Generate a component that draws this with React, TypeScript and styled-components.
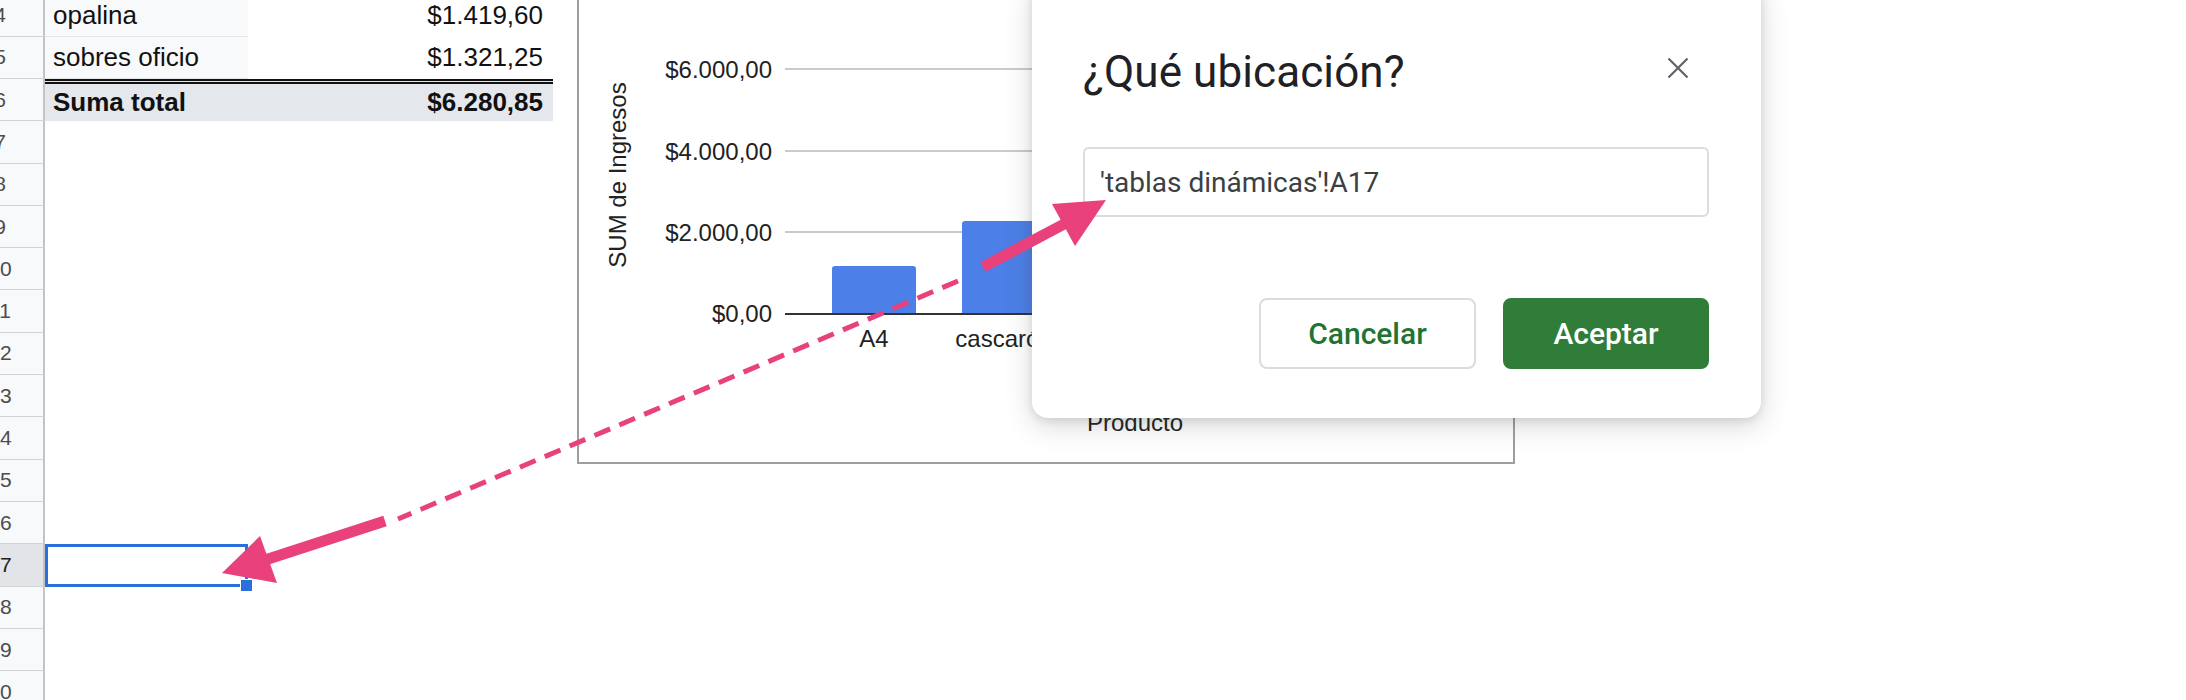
import React from "react";
import styled, { createGlobalStyle } from "styled-components";

const GlobalStyle = createGlobalStyle`
  html, body { margin: 0; padding: 0; background: #fff; overflow: hidden; }
  body { font-family: "Liberation Sans", Arial, sans-serif; }
`;

const ROW_H = 42.3;

const Page = styled.div`
  position: relative;
  width: 2186px;
  height: 700px;
  overflow: hidden;
  background: #fff;
`;

const Sheet = styled.div`
  display: flex;
  flex-direction: column;
  margin-left: -43px;
  margin-top: -5.6px;
`;

const Row = styled.div`
  display: flex;
  height: ${ROW_H}px;
  flex: none;
`;

const RowHeader = styled.div<{ $active?: boolean }>`
  width: 88px;
  flex: none;
  box-sizing: border-box;
  border-right: 2px solid #c4c4c4;
  border-bottom: 1px solid #d3d3d3;
  background: ${(p) => (p.$active ? "#e2e4e7" : "#f8f9fa")};
  color: ${(p) => (p.$active ? "#202124" : "#4d4d4d")};
  font: 21px "Liberation Sans", Arial, sans-serif;
  display: flex;
  align-items: center;
  justify-content: center;
`;

type Variant = "item" | "total" | "empty";

const cellBg = (v: Variant) =>
  v === "item" ? "#f8f9fa" : v === "total" ? "#e4e7ec" : "transparent";

const LabelCell = styled.div<{ $variant: Variant; $selected?: boolean }>`
  position: relative;
  width: 203px;
  flex: none;
  box-sizing: border-box;
  padding: 0 8px;
  display: flex;
  align-items: center;
  font-size: 26px;
  color: #111;
  font-weight: ${(p) => (p.$variant === "total" ? 700 : 400)};
  background: ${(p) => cellBg(p.$variant)};
  border-top: ${(p) => (p.$variant === "total" ? "5px double #111" : "none")};
  border-bottom: ${(p) => (p.$variant === "item" ? "1px solid #e6e7e9" : "none")};
  box-shadow: ${(p) => (p.$selected ? "inset 0 0 0 3px #2a6fdc" : "none")};
`;

const ValueCell = styled.div<{ $variant: Variant }>`
  width: 305px;
  flex: none;
  box-sizing: border-box;
  padding: 0 10px;
  display: flex;
  align-items: center;
  justify-content: flex-end;
  font-size: 26px;
  color: #111;
  font-weight: ${(p) => (p.$variant === "total" ? 700 : 400)};
  background: ${(p) => (p.$variant === "total" ? cellBg("total") : "transparent")};
  border-top: ${(p) => (p.$variant === "total" ? "5px double #111" : "none")};
`;

const FillHandle = styled.span`
  position: absolute;
  right: -5px;
  bottom: -5px;
  width: 11px;
  height: 11px;
  background: #2a6fdc;
  border: 1px solid #fff;
  z-index: 2;
`;

const ChartFrame = styled.div`
  position: absolute;
  left: 577px;
  top: -20px;
  width: 938px;
  height: 484px;
  box-sizing: border-box;
  border: 2px solid #9e9e9e;
  background: #fff;
  z-index: 3;
`;

const ChartSvg = styled.svg`
  display: block;
  font-family: "Liberation Sans", Arial, sans-serif;
`;

const Dialog = styled.div`
  position: absolute;
  left: 1032px;
  top: -20px;
  width: 729px;
  box-sizing: border-box;
  padding: 64px 52px 49px 51px;
  background: #fff;
  border-radius: 16px;
  box-shadow: 0 8px 28px rgba(60, 64, 67, 0.2), 0 2px 8px rgba(60, 64, 67, 0.14);
  display: flex;
  flex-direction: column;
  z-index: 5;
  font-family: Roboto, "Noto Sans", sans-serif;
`;

const DialogHeader = styled.div`
  display: flex;
  justify-content: space-between;
  align-items: flex-start;
  height: 56px;
`;

const Title = styled.h2`
  margin: 0;
  font-size: 44px;
  line-height: 56px;
  font-weight: 400;
  color: #202124;
  letter-spacing: 0.1px;
`;

const CloseButton = styled.button`
  width: 24px;
  height: 24px;
  margin: 12px 19px 0 0;
  padding: 0;
  border: none;
  background: transparent;
  display: flex;
`;

const RangeInput = styled.input`
  margin-top: 47px;
  height: 70px;
  width: 100%;
  box-sizing: border-box;
  border: 2px solid #dadce0;
  border-radius: 6px;
  padding: 0 15px;
  font-family: Roboto, "Noto Sans", sans-serif;
  font-size: 28px;
  color: #3c4043;
  background: #fff;
  outline: none;
`;

const Actions = styled.div`
  margin-top: 81px;
  display: flex;
  justify-content: flex-end;
  gap: 27px;
`;

const ActionButton = styled.button<{ $primary?: boolean; $w: number }>`
  width: ${(p) => p.$w}px;
  height: 71px;
  box-sizing: border-box;
  border-radius: 8px;
  border: 2px solid ${(p) => (p.$primary ? "#2f7d39" : "#dadce0")};
  background: ${(p) => (p.$primary ? "#2f7d39" : "#fff")};
  color: ${(p) => (p.$primary ? "#fff" : "#1f7434")};
  font-family: Roboto, "Noto Sans", sans-serif;
  font-size: 30px;
  font-weight: 500;
  padding: 0;
`;

const Annotation = styled.svg`
  position: absolute;
  left: 0;
  top: 0;
  width: 2186px;
  height: 700px;
  pointer-events: none;
  z-index: 10;
`;

const rows: { n: number; label?: string; value?: string; variant: Variant }[] = [
  { n: 4, label: "opalina", value: "$1.419,60", variant: "item" },
  { n: 5, label: "sobres oficio", value: "$1.321,25", variant: "item" },
  { n: 6, label: "Suma total", value: "$6.280,85", variant: "total" },
  ...Array.from({ length: 14 }, (_, i) => ({ n: 7 + i, variant: "empty" as Variant })),
];

const PINK = "#e8417c";

const bars = [
  { label: "A4", cx: 874, top: 266 },
  { label: "cascarón", cx: 1004, top: 221 },
];

const barPath = (cx: number, top: number) => {
  const l = cx - 42;
  const r = cx + 42;
  const b = 314;
  const rr = 3;
  return `M${l} ${b} L${l} ${top + rr} Q${l} ${top} ${l + rr} ${top} L${r - rr} ${top} Q${r} ${top} ${r} ${top + rr} L${r} ${b} Z`;
};

export default function App() {
  return (
    <>
      <GlobalStyle />
      <Page>
        <Sheet>
          {rows.map((r) => (
            <Row key={r.n}>
              <RowHeader $active={r.n === 17}>{r.n}</RowHeader>
              <LabelCell $variant={r.variant} $selected={r.n === 17}>
                {r.label}
                {r.n === 17 && <FillHandle />}
              </LabelCell>
              <ValueCell $variant={r.variant}>{r.value}</ValueCell>
            </Row>
          ))}
        </Sheet>

        <ChartFrame>
          <ChartSvg width={934} height={480} viewBox="579 -18 934 480">
            <text x={0} y={0} transform="translate(626,175) rotate(-90)" textAnchor="middle" fontSize={24} fill="#222">
              SUM de Ingresos
            </text>
            {[
              { y: 69, t: "$6.000,00" },
              { y: 151, t: "$4.000,00" },
              { y: 232, t: "$2.000,00" },
            ].map((g) => (
              <g key={g.t}>
                <line x1={785} x2={1485} y1={g.y} y2={g.y} stroke="#cacaca" strokeWidth={2} />
                <text x={772} y={g.y + 8.6} textAnchor="end" fontSize={24} fill="#222">
                  {g.t}
                </text>
              </g>
            ))}
            <text x={772} y={321.6} textAnchor="end" fontSize={24} fill="#222">
              $0,00
            </text>
            {bars.map((b) => (
              <g key={b.label}>
                <path d={barPath(b.cx, b.top)} fill="#4c7fe7" />
                <text x={b.cx} y={346.6} textAnchor="middle" fontSize={24} fill="#222">
                  {b.label}
                </text>
              </g>
            ))}
            <line x1={785} x2={1485} y1={314} y2={314} stroke="#333" strokeWidth={2} />
            <text x={1135} y={431} textAnchor="middle" fontSize={24} fill="#222">
              Producto
            </text>
          </ChartSvg>
        </ChartFrame>

        <Dialog>
          <DialogHeader>
            <Title>¿Qué ubicación?</Title>
            <CloseButton aria-label="Cerrar">
              <svg width="24" height="24" viewBox="0 0 24 24">
                <path d="M2.5 2.5 L21.5 21.5 M21.5 2.5 L2.5 21.5" stroke="#5f6368" strokeWidth="2.2" fill="none" />
              </svg>
            </CloseButton>
          </DialogHeader>
          <RangeInput readOnly value="'tablas dinámicas'!A17" />
          <Actions>
            <ActionButton $w={217}>Cancelar</ActionButton>
            <ActionButton $w={206} $primary>
              Aceptar
            </ActionButton>
          </Actions>
        </Dialog>

        <Annotation viewBox="0 0 2186 700">
          <line x1={958} y1={281} x2={398} y2={519} stroke={PINK} strokeWidth={5} strokeDasharray="17 10" />
          <line x1={983} y1={267} x2={1068} y2={222} stroke={PINK} strokeWidth={11} />
          <polygon points="1106,200 1052,204 1075,246" fill={PINK} />
          <line x1={385} y1={521} x2={262} y2={561} stroke={PINK} strokeWidth={11} />
          <polygon points="222,573 260,536 277,583" fill={PINK} />
        </Annotation>
      </Page>
    </>
  );
}
